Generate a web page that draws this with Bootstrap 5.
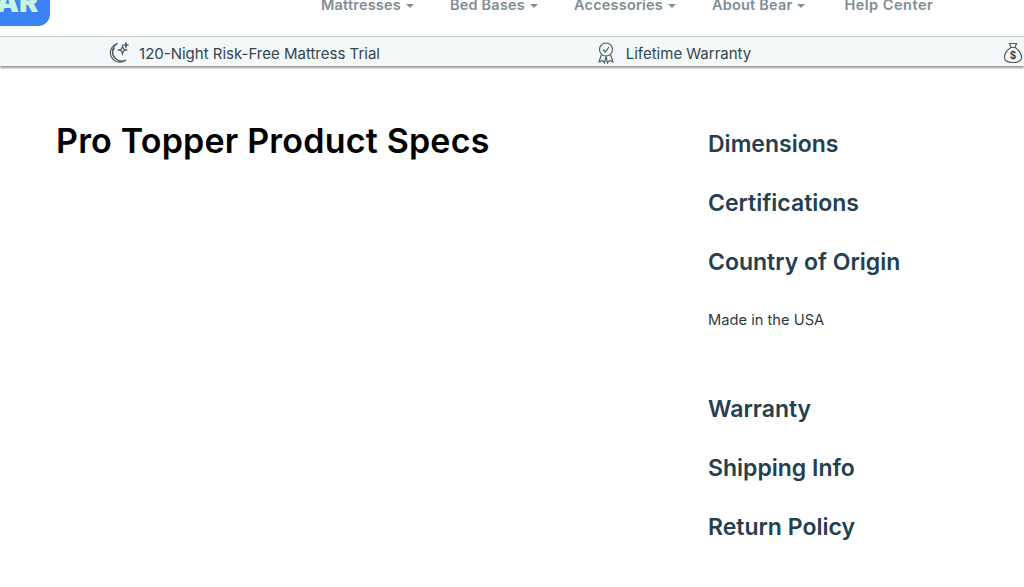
<!DOCTYPE html>
<html lang="en">
<head>
    <meta charset="UTF-8">
    <meta name="viewport" content="width=device-width, initial-scale=1.0">
    <title>Pro Topper Product Specs</title>
    <link rel="stylesheet" href="https://cdn.jsdelivr.net/npm/bootstrap@5.3.0/dist/css/bootstrap.min.css">
    <style>
        html, body {
            overflow: hidden;
            height: 587px;
        }

        body {
            background-color: #fff;
            font-family: "Inter", "Liberation Sans", sans-serif;
        }

        .site-head {
            height: 36px;
            overflow: hidden;
        }

        .bear-logo {
            width: 50px;
            height: 26px;
            background-color: #3b82f6;
            border-bottom-right-radius: 12px;
            color: #c8f5dc;
            font-weight: 900;
            font-size: 29px;
            line-height: 26px;
            white-space: nowrap;
        }

        .bear-logo span {
            display: block;
            margin-top: -11px;
            margin-left: -4px;
        }

        .head-links {
            margin-left: 271px;
            height: 10px;
            line-height: 10px;
        }

        .head-link {
            color: #7f8d95;
            font-size: 14.5px;
            font-weight: 600;
            letter-spacing: 0.2px;
            text-decoration: none;
            white-space: nowrap;
            margin-right: 36px;
        }

        .head-link.dropdown-toggle::after {
            vertical-align: 2px;
            border-top-width: 4px;
            border-left-width: 4px;
            border-right-width: 4px;
            margin-left: 5px;
        }

        .head-link-last {
            margin-left: 3px;
            letter-spacing: 0.5px;
        }

        .promo-bar {
            height: 30px;
            padding: 0 0 0 30px;
            background-color: #f5f8f8;
            border-top: 1px solid #c9cdcd;
            box-shadow: 0 2px 2px rgba(0, 0, 0, 0.4);
            position: relative;
            display: grid;
            grid-template-columns: 429px 429px 136px;
        }

        .promo-item {
            gap: 10px;
            color: #33454f;
            font-size: 15px;
            white-space: nowrap;
            padding-top: 5px;
        }

        .promo-money {
            padding-left: 115px;
        }

        .promo-item svg {
            stroke: #4d5f68;
            fill: none;
            stroke-width: 1.2;
            margin-top: -2px;
        }

        .spec-title {
            font-size: 34px;
            font-weight: 600;
            letter-spacing: 0.2px;
            color: #000;
            margin: 0;
            line-height: 40px;
        }

        .spec-main {
            padding: 55px 0 0 56px;
        }

        .spec-left {
            width: 652px;
        }

        .spec-head {
            color: #24404f;
            font-size: 23px;
            font-weight: 600;
            line-height: 30px;
            margin: 0 0 29px;
        }

        .spec-head-first {
            margin-top: 8px;
        }

        .spec-note {
            color: #33393d;
            font-size: 14.7px;
            line-height: 20px;
            margin: 0 0 64px;
            padding-top: 4px;
        }
    </style>
</head>
<body>
    <header class="site-head d-flex align-items-start">
        <div class="bear-logo"><span>AR</span></div>
        <nav class="head-links d-flex">
            <a class="head-link dropdown-toggle" href="#">Mattresses</a>
            <a class="head-link dropdown-toggle" href="#">Bed Bases</a>
            <a class="head-link dropdown-toggle" href="#">Accessories</a>
            <a class="head-link dropdown-toggle" href="#">About Bear</a>
            <a class="head-link head-link-last" href="#">Help Center</a>
        </nav>
    </header>

    <div class="promo-bar">
        <div class="promo-item d-flex align-items-center justify-content-center">
            <svg width="20" height="22" viewBox="0 0 20 22">
                <path d="M8.500 1.500 A9.500 9.500 0 1 0 17 18 A9 9 0 0 1 8.500 1.500 Z"/>
                <path d="M5.500 6 A7 7 0 0 0 6.500 16.500"/>
                <path d="M13.500 4 L14.500 7 L17.500 8 L14.500 9 L13.500 12 L12.500 9 L9.500 8 L12.500 7 Z"/>
                <path d="M17 1 L17.500 2.500 L19 3 L17.500 3.500 L17 5 L16.500 3.500 L15 3 L16.500 2.500 Z"/>
            </svg>
            <span>120-Night Risk-Free Mattress Trial</span>
        </div>
        <div class="promo-item d-flex align-items-center justify-content-center">
            <svg width="20" height="22" viewBox="0 0 20 22">
                <circle cx="10" cy="7.500" r="6.500"/>
                <path d="M7 7.500 L9.300 10 L13 5"/>
                <path d="M5.500 12.500 L3 20 L6.500 18.500 L8.500 21 L10 14.500 L11.500 21 L13.500 18.500 L17 20 L14.500 12.500"/>
            </svg>
            <span>Lifetime Warranty</span>
        </div>
        <div class="promo-item promo-money d-flex align-items-center">
            <svg width="20" height="22" viewBox="0 0 20 22">
                <path d="M6.500 1.500 H13.500 L12 5.500 H8 Z"/>
                <path d="M8 5.500 C4 8 1.500 12 1.500 15.500 C1.500 19 4.500 20.500 10 20.500 C15.500 20.500 18.500 19 18.500 15.500 C18.500 12 16 8 12 5.500"/>
                <text x="10" y="17" text-anchor="middle" font-size="10" font-weight="700" fill="#33454f" stroke="none">$</text>
            </svg>
        </div>
    </div>

    <main class="spec-main d-flex">
        <div class="spec-left">
            <h1 class="spec-title">Pro Topper Product Specs</h1>
        </div>
        <div>
            <h2 class="spec-head spec-head-first">Dimensions</h2>
            <h2 class="spec-head">Certifications</h2>
            <h2 class="spec-head">Country of Origin</h2>
            <p class="spec-note">Made in the USA</p>
            <h2 class="spec-head">Warranty</h2>
            <h2 class="spec-head">Shipping Info</h2>
            <h2 class="spec-head">Return Policy</h2>
        </div>
    </main>
    <script src="https://cdn.jsdelivr.net/npm/bootstrap@5.3.0/dist/js/bootstrap.bundle.min.js"></script>
</body>
</html>
